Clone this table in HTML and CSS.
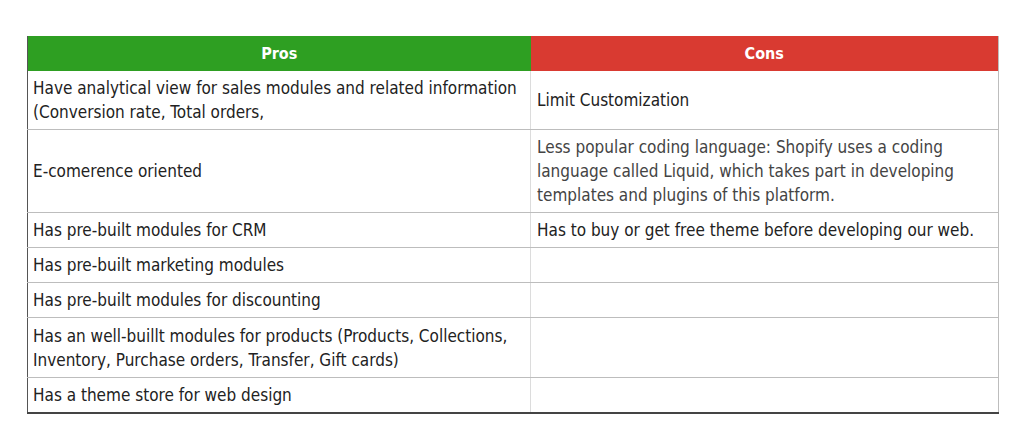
FILE: index.html
```html
<!DOCTYPE html>
<html>
<head>
<meta charset="utf-8">
<link rel="stylesheet" href="styles.css">
</head>
<body>
<div class="page">
<table class="pc">
  <colgroup><col class="c1"><col class="c2"></colgroup>
  <thead>
    <tr><th class="pros">Pros</th><th class="cons">Cons</th></tr>
  </thead>
  <tbody>
    <tr class="h2"><td>Have analytical view for sales modules and related information (Conversion rate, Total orders,</td><td>Limit Customization</td></tr>
    <tr class="h3"><td>E-comerence oriented</td><td class="muted">Less popular coding language: Shopify uses a coding language called Liquid, which takes part in developing templates and plugins of this platform.</td></tr>
    <tr><td>Has pre-built modules for CRM</td><td>Has to buy or get free theme before developing our web.</td></tr>
    <tr><td>Has pre-built marketing modules</td><td></td></tr>
    <tr><td>Has pre-built modules for discounting</td><td></td></tr>
    <tr class="h2 tall"><td>Has an well-buillt modules for products (Products, Collections, Inventory, Purchase orders, Transfer, Gift cards)</td><td></td></tr>
    <tr class="last"><td>Has a theme store for web design</td><td></td></tr>
  </tbody>
</table>
</div>
</body>
</html>
```

FILE: styles.css
```css
html, body {
  margin: 0;
  padding: 0;
  background: #ffffff;
}
.page {
  padding: 36px 0 0 27px;
}
.pc {
  border-collapse: collapse;
  table-layout: fixed;
  width: 971px;
  font-family: "DejaVu Sans Condensed", "DejaVu Sans", sans-serif;
  font-size: 17px;
  color: #222222;
  border-left: 1px solid #555555;
  border-right: 1px solid #bdbdbd;
}
.c1 { width: 503px; }
.c2 { width: 468px; }
.pc th {
  height: 35px;
  padding: 0;
  color: #ffffff;
  font-weight: bold;
  font-size: 16px;
  text-align: center;
  vertical-align: middle;
}
.pc th.pros { background: #2e9f22; }
.pc th.cons { background: #d93a31; }
.pc td {
  padding: 5px 5px 5px 5px;
  line-height: 24px;
  height: 24px;
  vertical-align: middle;
  border-bottom: 1px solid #bdbdbd;
  word-wrap: break-word;
}
.pc tr.tall td {
  padding-top: 6px;
}
.pc td + td {
  border-left: 1px solid #dcdcdc;
  padding-left: 6px;
}
.pc td.muted { color: #444444; }
.pc tr.last td {
  border-bottom: 2px solid #444444;
}
```
